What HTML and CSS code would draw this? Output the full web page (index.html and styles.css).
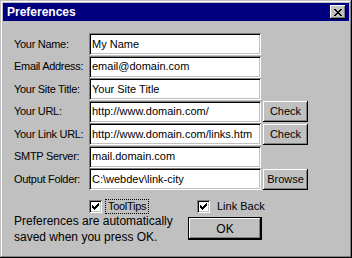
FILE: index.html
```html
<!DOCTYPE html>
<html>
<head>
<meta charset="utf-8">
<link rel="stylesheet" href="styles.css">
</head>
<body>
<div class="win">
  <div class="titlebar">
    <span class="title">Preferences</span>
    <div class="close"><svg width="8" height="7" viewBox="0 0 8 7"><path d="M0 0h2v1h1v1h2v-1h1v-1h2v1h-1v1h-1v1h-1v1h1v1h1v1h1v1h-2v-1h-1v-1h-2v1h-1v1h-2v-1h1v-1h1v-1h1v-1h-1v-1h-1v-1h-1z" fill="#000"/></svg></div>
  </div>
  <div class="content">
    <div class="form">
      <div class="label">Your Name:</div><div class="field">My Name</div><div></div>
      <div class="label">Email Address:</div><div class="field">email@domain.com</div><div></div>
      <div class="label">Your Site Title:</div><div class="field">Your Site Title</div><div></div>
      <div class="label">Your URL:</div><div class="field">http://www.domain.com/</div><div class="btn small">Check</div>
      <div class="label">Your Link URL:</div><div class="field">http://www.domain.com/links.htm</div><div class="btn small">Check</div>
      <div class="label">SMTP Server:</div><div class="field">mail.domain.com</div><div></div>
      <div class="label">Output Folder:</div><div class="field">C:\webdev\link-city</div><div class="btn small">Browse</div>
    </div>
    <div class="bottom">
      <div class="check tooltips"><span class="box"><svg width="7" height="7" viewBox="0 0 7 7"><path d="M0 2h1v1h1v1h1v-1h1v-1h1v-1h1v-1h1v3h-1v1h-1v1h-1v1h-1v1h-1v-1h-1v-1h-1z" fill="#000"/></svg></span><span class="focus">ToolTips</span></div>
      <div class="check linkback"><span class="box"><svg width="7" height="7" viewBox="0 0 7 7"><path d="M0 2h1v1h1v1h1v-1h1v-1h1v-1h1v-1h1v3h-1v1h-1v1h-1v1h-1v1h-1v-1h-1v-1h-1z" fill="#000"/></svg></span><span class="ctext">Link Back</span></div>
      <p class="note">Preferences are automatically<br>saved when you press OK.</p>
      <div class="okwrap"><div class="btn ok">OK</div></div>
    </div>
  </div>
</div>
</body>
</html>
```

FILE: styles.css
```css
html, body {
  margin: 0;
  padding: 0;
  background: #c0c0c0;
}
body {
  font-family: "Liberation Sans", Arial, sans-serif;
  font-size: 11px;
  color: #000;
}
.win {
  width: 352px;
  height: 258px;
  box-sizing: border-box;
  padding: 3px;
  background: #c0c0c0;
  box-shadow: inset -1px -1px #000, inset 1px 1px #c0c0c0, inset -2px -2px #808080, inset 2px 2px #fff;
}
.titlebar {
  height: 18px;
  background: #000080;
  display: flex;
  align-items: center;
  justify-content: space-between;
  padding: 0 3px 0 4px;
}
.title {
  color: #fff;
  font-weight: bold;
  font-size: 12px;
}
.close {
  width: 16px;
  height: 14px;
  box-sizing: border-box;
  background: #c0c0c0;
  box-shadow: inset -1px -1px #000, inset 1px 1px #fff, inset -2px -2px #808080;
  display: flex;
  align-items: center;
  justify-content: center;
}
.close svg { display: block; }
.content {
  padding: 12px 0 0 11px;
}
.form {
  display: grid;
  grid-template-columns: 75px 174px 45px;
  grid-auto-rows: 22px;
  row-gap: 0.5px;
}
.label {
  display: flex;
  align-items: center;
  letter-spacing: -0.3px;
  padding-bottom: 1px;
}
.field {
  width: 172px;
  height: 22px;
  box-sizing: border-box;
  background: #fff;
  padding: 0 0 1px 3px;
  display: flex;
  align-items: center;
  white-space: nowrap;
  overflow: hidden;
  box-shadow: inset 1px 1px #808080, inset -1px -1px #fff, inset 2px 2px #000, inset -2px -2px #c0c0c0;
}
.btn {
  box-sizing: border-box;
  background: #c0c0c0;
  display: flex;
  align-items: center;
  justify-content: center;
  box-shadow: inset -1px -1px #000, inset 1px 1px #fff, inset -2px -2px #808080;
}
.btn.small {
  height: 21px;
  align-self: center;
  font-size: 11px;
  padding-bottom: 1px;
}
.bottom {
  display: grid;
  grid-template-columns: 174px 74px;
  grid-template-rows: 13px auto;
  margin-top: 10px;
}
.check {
  display: flex;
  align-items: center;
  height: 13px;
  font-size: 11px;
  white-space: nowrap;
}
.tooltips { padding-left: 75px; }
.linkback { padding-left: 9px; }
.box {
  width: 13px;
  height: 13px;
  box-sizing: border-box;
  background: #fff;
  box-shadow: inset 1px 1px #808080, inset -1px -1px #fff, inset 2px 2px #000, inset -2px -2px #c0c0c0;
  display: flex;
  align-items: center;
  justify-content: center;
  flex: none;
}
.box svg { display: block; }
.focus {
  margin-left: 4px;
  padding: 0 2px;
  line-height: 13px;
  letter-spacing: -0.3px;
  outline: 1px dotted #000;
  outline-offset: 0;
}
.ctext {
  margin-left: 7px;
  line-height: 13px;
}
.note {
  margin: 0;
  line-height: 16px;
  font-size: 12px;
  white-space: nowrap;
}
.okwrap {
  padding-top: 4px;
}
.btn.ok {
  width: 74px;
  height: 23px;
  font-size: 12px;
  box-shadow: inset 0 0 0 1px #000, inset -2px -2px #000, inset 2px 2px #fff, inset -3px -3px #808080;
}
```
